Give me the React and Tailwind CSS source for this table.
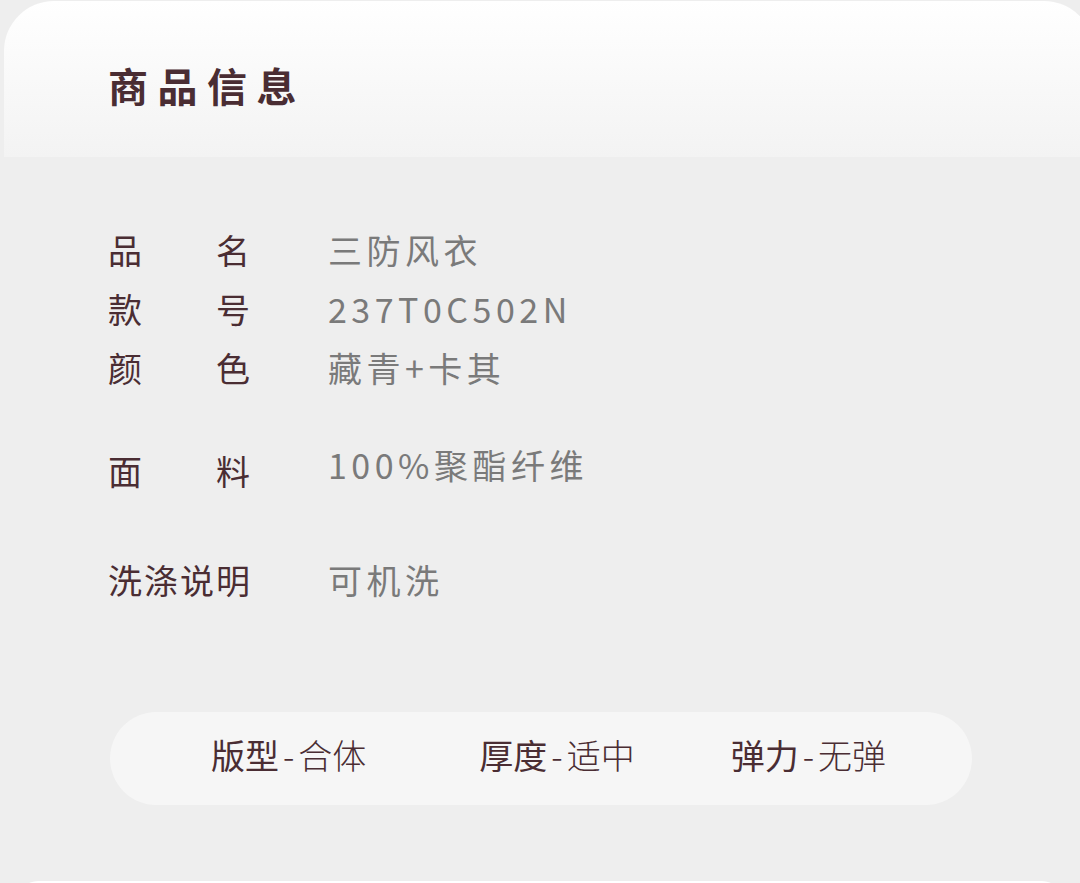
import React from 'react';

const font = { fontFamily: '"Noto Sans CJK SC", "Noto Sans", sans-serif' };

const rows = [
  { label: '品名', value: '三防风衣' },
  { label: '款号', value: '237T0C502N' },
  { label: '颜色', value: '藏青+卡其' },
];

const traits = [
  { label: '版型', value: '合体' },
  { label: '厚度', value: '适中' },
  { label: '弹力', value: '无弹' },
];

const Label = ({ children }) => (
  <div className="w-[142px] text-[34px] text-[#4a2d33] text-justify [text-align-last:justify]">{children}</div>
);

const Value = ({ children, className = '' }) => (
  <div className={`text-[34px] text-[#7a7a7a] tracking-[4.5px] ${className}`}>{children}</div>
);

export default function App() {
  return (
    <div className="w-[1080px] h-[883px] bg-[#eeeeee] overflow-hidden" style={font}>
      {/* header card */}
      <div className="ml-[4px] mt-[1px] w-[1090px] h-[156px] rounded-t-[50px] bg-gradient-to-b from-white to-[#f3f3f3] pl-[104px] pt-[60px]">
        <h1 className="text-[40px] leading-[48px] font-bold tracking-[9.5px] text-[#4a2d33]">商品信息</h1>
      </div>

      <div className="pl-[108px] pt-[63px]">
        {rows.map((r) => (
          <div key={r.label} className="flex items-center h-[59px] gap-[78px]">
            <Label>{r.label}</Label>
            <Value>{r.value}</Value>
          </div>
        ))}

        <div className="flex items-center h-[59px] gap-[78px] mt-[44px]">
          <Label>面料</Label>
          <Value className="-mt-[12px]">100%聚酯纤维</Value>
        </div>

        <div className="flex items-center h-[59px] gap-[78px] mt-[50px]">
          <Label>洗涤说明</Label>
          <Value>可机洗</Value>
        </div>
      </div>

      {/* traits pill */}
      <div className="ml-[110px] mt-[103px] w-[862px] h-[93px] rounded-full bg-[#f6f6f6] flex items-center pl-[101px] pb-[7px] text-[34px] text-[#4a2d33]">
        {traits.map((t, i) => (
          <div key={t.label} className={`flex items-center leading-none ${i === 1 ? 'ml-[113px]' : i === 2 ? 'ml-[96px]' : ''}`}>
            <span className="font-normal">{t.label}</span>
            <span className="font-light mx-[4px]">-</span>
            <span className="font-light">{t.value}</span>
          </div>
        ))}
      </div>

      {/* next card edge */}
      <div className="mx-[18px] mt-[76px] h-[20px] rounded-t-[30px] bg-white" />
    </div>
  );
}
